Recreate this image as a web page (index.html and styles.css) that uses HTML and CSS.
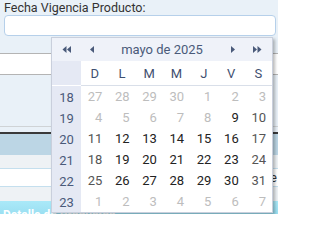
FILE: index.html
```html
<!DOCTYPE html>
<html lang="es">
<head>
<meta charset="utf-8">
<title>Fecha Vigencia Producto</title>
<link rel="stylesheet" href="styles.css">
</head>
<body>
<div class="page">
  <div class="panel">
    <label class="label">Fecha Vigencia Producto:</label>
    <div class="input"></div>
  </div>
  <div class="field2"></div>
  <div class="area"></div>
  <div class="area-gap"></div>
  <div class="table">
    <div class="thead"></div>
    <div class="row row-alt r1"></div>
    <div class="row r2"><span>Clave</span></div>
    <div class="row row-alt r3"></div>
  </div>
  <div class="bar">Detalle de Productos</div>

  <div class="cal">
    <div class="cal-head">
      <div class="nav">
        <span class="btn"><svg width="9" height="7" viewBox="0 0 9 7"><polygon points="4.5,0 0.5,3.5 4.5,7"/><polygon points="9,0 5,3.5 9,7"/></svg></span>
        <span class="btn"><svg width="4" height="7" viewBox="0 0 4 7"><polygon points="4,0 0,3.5 4,7"/></svg></span>
      </div>
      <div class="title">mayo de 2025</div>
      <div class="nav">
        <span class="btn"><svg width="4" height="7" viewBox="0 0 4 7"><polygon points="0,0 4,3.5 0,7"/></svg></span>
        <span class="btn"><svg width="9" height="7" viewBox="0 0 9 7"><polygon points="0,0 4,3.5 0,7"/><polygon points="4.5,0 8.5,3.5 4.5,7"/></svg></span>
      </div>
    </div>
    <div class="grid">
      <div class="wk wk-h"></div>
      <div class="dn">D</div><div class="dn">L</div><div class="dn">M</div><div class="dn">M</div><div class="dn">J</div><div class="dn">V</div><div class="dn">S</div>

      <div class="wk">18</div>
      <div class="d o">27</div><div class="d o">28</div><div class="d o">29</div><div class="d o">30</div><div class="d o">1</div><div class="d o">2</div><div class="d o">3</div>

      <div class="wk">19</div>
      <div class="d o">4</div><div class="d o">5</div><div class="d o">6</div><div class="d o">7</div><div class="d o">8</div><div class="d">9</div><div class="d we">10</div>

      <div class="wk">20</div>
      <div class="d we">11</div><div class="d">12</div><div class="d">13</div><div class="d">14</div><div class="d">15</div><div class="d">16</div><div class="d we">17</div>

      <div class="wk">21</div>
      <div class="d we">18</div><div class="d">19</div><div class="d">20</div><div class="d">21</div><div class="d">22</div><div class="d">23</div><div class="d we">24</div>

      <div class="wk">22</div>
      <div class="d we">25</div><div class="d">26</div><div class="d">27</div><div class="d">28</div><div class="d">29</div><div class="d">30</div><div class="d we">31</div>

      <div class="wk">23</div>
      <div class="d o">1</div><div class="d o">2</div><div class="d o">3</div><div class="d o">4</div><div class="d o">5</div><div class="d o">6</div><div class="d o">7</div>
    </div>
  </div>
</div>
</body>
</html>
```
FILE: styles.css
```css
* { box-sizing: border-box; }
html, body { margin: 0; padding: 0; }
body {
  width: 278px;
  height: 214px;
  overflow: hidden;
  background: #ffffff;
  font-family: Roboto, "Liberation Sans", Arial, sans-serif;
}
.page {
  position: relative;
  width: 278px;
  height: 214px;
  overflow: hidden;
}
.panel {
  background: #e9f1f8;
  height: 53px;
  padding: 0 2px 0 4px;
}
.label {
  display: block;
  height: 15px;
  line-height: 15px;
  font-size: 12.5px;
  color: #333333;
}
.input {
  height: 21px;
  background: #ffffff;
  border: 1px solid #b6d0ea;
  border-radius: 4px;
}
.field2 {
  height: 22px;
  background: #ffffff;
  border-top: 1px solid #b4b4b4;
  border-bottom: 1px solid #b4b4b4;
}
.area {
  height: 52px;
  background: #e9f1f8;
  border-bottom: 1px solid #cfd3d6;
}
.area-gap {
  height: 5px;
  background: #e9f1f8;
}
.table {
  border-top: 2px solid #3a3a3a;
}
.thead {
  height: 21px;
  background: #bcd6e5;
}
.row {
  display: flex;
  justify-content: flex-end;
  align-items: center;
  font-size: 12.5px;
  color: #333333;
  padding-right: 1px;
}
.row-alt { background: #eef2f5; }
.r1 { height: 14px; border-bottom: 1px solid #c4dfee; }
.r2 { height: 18px; background: #ffffff; border-bottom: 1px solid #c4dfee; }
.r3 { height: 14px; }
.bar {
  height: 20px;
  background: linear-gradient(to bottom, #aae9f8, #93daee);
  color: #ffffff;
  font-weight: bold;
  font-size: 12px;
  line-height: 14px;
  padding: 7px 0 0 3px;
  white-space: nowrap;
}

.cal {
  position: absolute;
  left: 51px;
  top: 37px;
  width: 222px;
  background: #ffffff;
  border: 1px solid #c9cfdc;
  box-shadow: 2px 2px 3px rgba(0, 0, 0, 0.28);
}
.cal-head {
  height: 23px;
  background: #eff2f9;
  display: flex;
  align-items: center;
  justify-content: space-between;
  padding: 0 2px;
}
.nav { display: flex; }
.btn {
  width: 25px;
  height: 23px;
  display: flex;
  align-items: center;
  justify-content: center;
}
.btn svg { fill: #4a5a7a; display: block; }
.title {
  font-size: 13px;
  color: #4a5a7a;
}
.grid {
  display: grid;
  grid-template-columns: 29px repeat(7, 1fr);
  grid-auto-rows: 21px;
  grid-template-rows: 25px;
  font-size: 13px;
}
.wk {
  background: #e5e9f4;
  color: #4a5a7a;
  display: flex;
  align-items: center;
  justify-content: center;
  padding-top: 2px;
}
.wk-h { border-bottom: 1px solid #ffffff; }
.dn {
  color: #3f4f70;
  display: flex;
  align-items: center;
  justify-content: center;
  border-bottom: 1px solid #d9dfe9;
}
.d {
  color: #222222;
  display: flex;
  align-items: center;
  justify-content: flex-end;
  padding-right: 6px;
  padding-bottom: 1px;
}
.d.we { color: #555555; }
.d.o { color: #bdbdbd; }
```
